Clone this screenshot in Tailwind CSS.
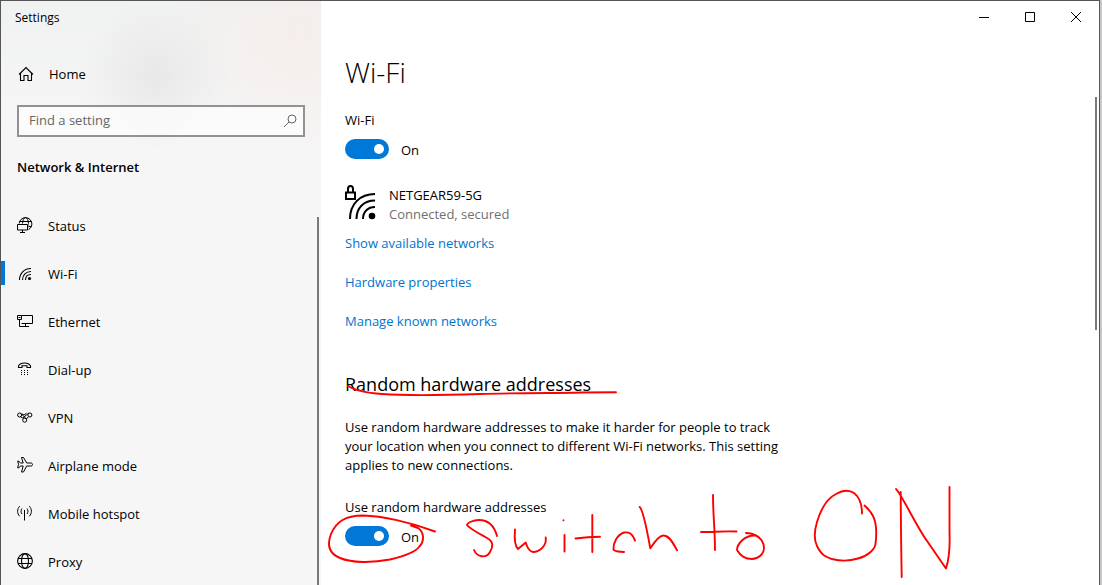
<!DOCTYPE html>
<html lang="en">
  <head>
    <meta charset="UTF-8" />
    <meta name="viewport" content="width=device-width, initial-scale=1.0" />
    <title>Settings</title>
    <script src="https://cdn.jsdelivr.net/npm/@tailwindcss/browser@4"></script>
  </head>
  <body
    class="flex h-screen overflow-hidden bg-[#c8c8c8] font-['Open_Sans','Noto_Sans',sans-serif] text-[13px] leading-5 text-black"
  >
    <div
      class="relative mr-0.5 flex flex-1 border-t border-r border-l border-[#555] bg-white"
    >
      <!-- Sidebar -->
      <aside
        class="relative flex w-80 shrink-0 flex-col bg-[#f6f6f6] bg-[radial-gradient(circle_at_155px_75px,#e8e8e8,transparent_75px),radial-gradient(circle_at_300px_30px,#f5eeeb,transparent_130px),linear-gradient(#f0f1f1,#f6f6f6_130px)]"
      >
        <div class="px-3.5 pt-[7px] text-xs leading-5">Settings</div>

        <a href="#" class="mt-[26px] flex h-10 items-center gap-[14px] px-4">
          <svg class="h-4 w-[18px]" viewBox="0 0 18 16" fill="none" stroke="currentColor" stroke-width="1.1">
            <path d="M2 8.500 9 1.500l7 7M3.500 7.500v7H7v-5h4v5h3.500v-7" />
          </svg>
          <span>Home</span>
        </a>

        <div class="relative mx-4 mt-[11px]">
          <input
            type="text"
            aria-label="Find a setting"
            placeholder="Find a setting"
            class="h-8 w-full border-2 border-[#929292] bg-white/60 px-2.5 pb-0.5 placeholder:text-[#666] focus:outline-none"
          />
          <svg class="absolute top-2 right-1.5 h-4 w-4" viewBox="0 0 16 16" fill="none" stroke="#666">
            <circle cx="9" cy="6" r="4" />
            <path d="M6 9 1 14" />
          </svg>
        </div>

        <h2 class="mt-5 px-4 font-semibold">Network &amp; Internet</h2>

        <nav class="mt-6">
          <a href="#" class="flex h-12 items-center gap-[15px] px-4">
            <svg class="h-4 w-4" viewBox="0 0 16 16" fill="none" stroke="currentColor">
              <circle cx="8.500" cy="7" r="6.400" />
              <ellipse cx="8.500" cy="7" rx="3" ry="6.400" />
              <path d="M2.500 4.500h12M2.500 9.500h12" />
              <path fill="#f6f6f6" stroke="none" d="M0 6.500h11.500V16H0z" />
              <path d="M.5 7.500h10v5.500H.5zM5.500 13v2.500M3 15.500h5" />
            </svg>
            <span class="pt-0.5">Status</span>
          </a>
          <a href="#" aria-current="page" class="relative flex h-12 items-center gap-[15px] px-4">
            <span class="absolute left-0 h-6 w-1 bg-[#0078d7]"></span>
            <svg class="h-4 w-4" viewBox="0 0 16 16" fill="none" stroke="currentColor" stroke-width="1.100">
              <path d="M2.500 15C2.500 8.500 7 3.500 14 3.500M5.500 15C5.500 10 9 6.500 14 6.500M8.500 15c0-3.500 2.200-5.500 5.500-5.500" />
              <circle cx="12.500" cy="13.500" r="1.600" fill="currentColor" stroke="none" />
            </svg>
            <span class="pt-0.5">Wi-Fi</span>
          </a>
          <a href="#" class="flex h-12 items-center gap-[15px] px-4">
            <svg class="h-4 w-4" viewBox="0 0 16 16" fill="none" stroke="currentColor">
              <path d="M4.500 2.500h11v8h-11M.5 2.500h4v4h-4zM2.500 6.500v7H12M8.500 10.500v3M1.500 4.500h2" />
            </svg>
            <span class="pt-0.5">Ethernet</span>
          </a>
          <a href="#" class="flex h-12 items-center gap-[15px] px-4">
            <svg class="h-4 w-4" viewBox="0 0 16 16" fill="none" stroke="currentColor" stroke-width="1.100">
              <path d="M1.500 6.500V5C3.500 1 11.500 1 13.500 5v1.500H10V4.700H5v1.800z" />
              <path stroke-dasharray="1 2" d="M4 9.500h8M4 11.500h8M4 13.500h8" />
            </svg>
            <span class="pt-0.5">Dial-up</span>
          </a>
          <a href="#" class="flex h-12 items-center gap-[15px] px-4">
            <svg class="h-4 w-4" viewBox="0 0 16 16" fill="none" stroke="currentColor">
              <circle cx="2.600" cy="6" r="2" />
              <circle cx="12.900" cy="6" r="2" />
              <circle cx="7.700" cy="11.200" r="2" />
              <path d="M4 4.500 9.500 10M3.500 7.800l2.300 1.200 6-5M5 5l2 1 2.500-1.800M11.500 7.700 9.500 10" />
            </svg>
            <span class="pt-0.5">VPN</span>
          </a>
          <a href="#" class="flex h-12 items-center gap-[15px] px-4">
            <svg class="h-4 w-4" viewBox="0 0 16 16" fill="none" stroke="currentColor" stroke-linejoin="round">
              <path d="M4.500.5h2L9.700 6h4.200c2.200 0 2.200 3 0 3H9.700l-3.200 6h-2L6.200 9H3.400L2 10.800H.6l1-3.300-1-3.300H2L3.400 6h2.800z" />
            </svg>
            <span class="pt-0.5">Airplane mode</span>
          </a>
          <a href="#" class="flex h-12 items-center gap-[15px] px-4">
            <svg class="h-4 w-4" viewBox="0 0 16 16" fill="none" stroke="currentColor">
              <path d="M7.500 5v10.500M5 3.500c-1.300 1.400-1.300 4 0 5.500M10 3.500c1.300 1.400 1.300 4 0 5.500" />
              <path d="M2.700 1.200C-.1 4 -.1 8.500 2.700 11.300M12.300 1.200c2.800 2.800 2.800 7.300 0 10.100" />
            </svg>
            <span class="pt-0.5">Mobile hotspot</span>
          </a>
          <a href="#" class="flex h-12 items-center gap-[15px] px-4">
            <svg class="h-4 w-4" viewBox="0 0 16 16" fill="none" stroke="currentColor" stroke-width="1.100">
              <circle cx="8" cy="8" r="7.400" />
              <ellipse cx="8" cy="8" rx="3.500" ry="7.400" />
              <path d="M1 5.500h14M1 10.500h14" />
            </svg>
            <span class="pt-0.5">Proxy</span>
          </a>
        </nav>

        <div class="absolute top-54 right-0.5 bottom-0 w-0.5 bg-[#7a7a7a]"></div>
      </aside>

      <!-- Content -->
      <div class="relative flex flex-1 flex-col">
        <div class="flex h-8 shrink-0 justify-end">
          <button type="button" aria-label="Minimize" class="flex w-[46px] items-center justify-center">
            <svg class="h-2.5 w-2.5" viewBox="0 0 10 10" stroke="currentColor"><path d="M0 5.500h10" /></svg>
          </button>
          <button type="button" aria-label="Maximize" class="flex w-[46px] items-center justify-center">
            <svg class="h-2.5 w-2.5" viewBox="0 0 10 10" fill="none" stroke="currentColor"><path d="M.5.5h9v9h-9z" /></svg>
          </button>
          <button type="button" aria-label="Close" class="flex w-[46px] items-center justify-center">
            <svg class="h-2.5 w-2.5" viewBox="0 0 10 10" stroke="currentColor"><path d="m0 0 10 10M10 0 0 10" /></svg>
          </button>
        </div>

        <main class="px-6">
          <h1 class="mt-[21px] text-[28px] leading-9 font-light">Wi-Fi</h1>

          <label for="wifi" class="mt-5 block">Wi-Fi</label>
          <div class="mt-[9px] flex h-5 items-center gap-3">
            <input
              id="wifi"
              type="checkbox"
              role="switch"
              checked
              class="flex h-5 w-11 appearance-none items-center rounded-full bg-[#999] px-[5px] before:h-2.5 before:w-2.5 before:rounded-full before:bg-white checked:justify-end checked:bg-[#0078d7]"
            />
            <span class="pt-0.5">On</span>
          </div>

          <div class="mt-[26px] flex gap-3">
            <svg class="h-9 w-8" viewBox="0 0 32 36" fill="none" stroke="currentColor" stroke-width="2">
              <path d="M1 7.500h9V14H1zM3 7.500V4c0-4 5-4 5 0v3.500" />
              <path d="M5 34C5 19 15 9 30 9M11.500 34C11.500 22.500 19 15.500 30 15.500M18 34c0-7.500 5-12 12-12" />
              <circle cx="27" cy="31" r="3.300" fill="currentColor" stroke="none" />
            </svg>
            <div class="pt-px leading-[19px]">
              <div>NETGEAR59-5G</div>
              <div class="text-[#707070]">Connected, secured</div>
            </div>
          </div>

          <div class="mt-[9px] flex flex-col items-start gap-[19px] text-[#0073cf]">
            <a href="#">Show available networks</a>
            <a href="#">Hardware properties</a>
            <a href="#">Manage known networks</a>
          </div>

          <h2 class="mt-[39px] text-lg leading-7">Random hardware addresses</h2>
          <p class="mt-5 max-w-[456px] leading-[19px]">
            Use random hardware addresses to make it harder for people to track
            your location when you connect to different Wi-Fi networks. This
            setting applies to new connections.
          </p>

          <label for="random" class="mt-[22px] block">Use random hardware addresses</label>
          <div class="mt-[9px] flex h-5 items-center gap-3">
            <input
              id="random"
              type="checkbox"
              role="switch"
              checked
              class="flex h-5 w-11 appearance-none items-center rounded-full bg-[#999] px-[5px] before:h-2.5 before:w-2.5 before:rounded-full before:bg-white checked:justify-end checked:bg-[#0078d7]"
            />
            <span class="pt-0.5">On</span>
          </div>
        </main>

        <div class="absolute top-24 right-0.5 h-[233px] w-0.5 bg-[#7a7a7a]"></div>
      </div>
    </div>

    <!-- Red pen notes -->
    <svg
      class="pointer-events-none absolute inset-0 h-full w-full"
      role="img"
      aria-label="switch to ON"
      fill="none"
      stroke="#f00"
      stroke-width="1.900"
      stroke-linecap="round"
      stroke-linejoin="round"
    >
      <path d="M348 386C356 391 368 393 382 394C410 396 450 395 480 394S570 393 582 392.500L616 392.300" />
      <path d="M435 531.500C410 522 382 516 363 515.500C345 515.500 336 522 331 534C326 547 330 554 340 558C352 563 372 563 390 559.500C405 556 416 551 419 547C425 541 424 532 418 528L411 525.500" />
      <path d="M497 536C494 525 488 520 479 520C473 520 467 523 467 525C470 529 480 534 487 538C494 542 493 547 490 552C486 559 477 557 474 550" />
      <path d="M515 529.500C514 541 516 547 518 549L525.700 542.500C527 546 528 551 533 552C540 552 547 545 545.700 537.500" />
      <path d="M563.500 520.200v.2M564.500 535v16.500" />
      <path d="M592.300 515v37M575.500 538.500Q588 537 600 536.800" />
      <path d="M635 540.700C632 533 629 532 624 532.500C617 535 613 543 613.500 549.500C615 552 619 551.500 624 552" />
      <path d="M639.700 507C643 510 647 530 650.300 548.300C655 541 660 535 664 535.500C670 536 674 545 677 550.300" />
      <path d="M713 495C713 515 715 530 715 550M701 532C712 532 724 531 736.500 531.500" />
      <path d="M746 533C749 533 753 533.500 755 535.500C745 535 737 544 737 550C741 557 746 559 752 559C758 559 764 554 764 548C764 542 760 537 755 535" />
      <path d="M862 513.500C862 503 858 496 854 493C849 489.500 843 490 836 494C826 499 820 512 817 522C814 532 814 540 817 546C822 556 826 557 832 559C840 561 850 561 858 558.500C868 556 875 549 875.500 544C877 532 876 522 873 516C870 510 867 508 864.500 505.500" />
      <path d="M900.700 492Q901 540 901.700 577M896 489C900 492 915 523 925 538L946 568.500C951 553 949.500 540 949.500 530V487" />
    </svg>
  </body>
</html>
